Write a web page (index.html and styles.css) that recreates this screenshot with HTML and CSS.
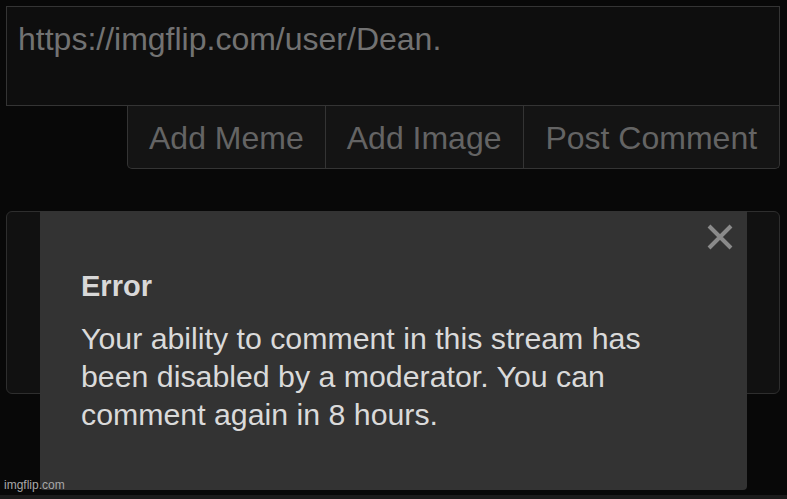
FILE: index.html
```html
<!DOCTYPE html>
<html lang="en">
<head>
<meta charset="utf-8">
<title>Comment</title>
<link rel="stylesheet" href="styles.css">
</head>
<body>
<div class="page">
  <div class="composer">
    <div class="input">https://imgflip.com/user/Dean.</div>
    <div class="actions">
      <div class="btn">Add Meme</div>
      <div class="btn">Add Image</div>
      <div class="btn">Post Comment</div>
    </div>
  </div>
  <div class="box"></div>
  <div class="modal">
    <svg class="close" width="26" height="26" viewBox="0 0 26 26" aria-hidden="true">
      <path d="M2 2 L24 24 M24 2 L2 24" stroke="#8a8a8a" stroke-width="4" stroke-linecap="butt"/>
    </svg>
    <div class="title">Error</div>
    <div class="message">Your ability to comment in this stream has<br>been disabled by a moderator. You can<br>comment again in 8 hours.</div>
  </div>
  <div class="watermark">imgflip.com</div>
</div>
<div class="strip"></div>
</body>
</html>
```

FILE: styles.css
```css
html, body {
  margin: 0;
  padding: 0;
  background: #080808;
  font-family: "Liberation Sans", Arial, sans-serif;
}
.page {
  position: relative;
  height: 495px;
  padding: 6px 7px 0 6px;
  box-sizing: border-box;
  overflow: hidden;
}
.composer {
  display: flex;
  flex-direction: column;
}
.input {
  height: 100px;
  box-sizing: border-box;
  border: 1px solid #343434;
  background: #0e0e0e;
  color: #727272;
  font-size: 32px;
  line-height: 38px;
  padding: 13px 11px 0 11px;
}
.actions {
  display: flex;
  margin-left: 121px;
  border: 1px solid #343434;
  border-top: none;
  border-radius: 0 0 5px 5px;
  background: #141414;
  overflow: hidden;
}
.btn {
  padding: 13px 21px 11px;
  font-size: 32px;
  line-height: 38px;
  color: #646464;
  white-space: nowrap;
}
.btn + .btn {
  border-left: 1px solid #343434;
}
.btn:last-child {
  flex: 1;
  text-align: center;
  padding: 13px 0 11px;
}
.box {
  margin-top: 42px;
  height: 183px;
  box-sizing: border-box;
  border: 1px solid #2e2e2e;
  border-radius: 6px;
  background: #111111;
}
.modal {
  position: absolute;
  left: 40px;
  top: 211px;
  width: 707px;
  height: 279px;
  box-sizing: border-box;
  background: #333333;
  border-radius: 0 0 4px 4px;
  padding: 59px 20px 0 41px;
  color: #dcdcdc;
}
.close {
  position: absolute;
  right: 14px;
  top: 13px;
}
.title {
  font-size: 29px;
  line-height: 32px;
  font-weight: bold;
  color: #d8d8d8;
}
.message {
  margin-top: 18px;
  font-size: 30.3px;
  line-height: 38px;
  color: #dadada;
}
.watermark {
  position: absolute;
  left: 4px;
  bottom: 3px;
  font-size: 12px;
  line-height: 14px;
  color: #a8a8a8;
}
.strip {
  height: 4px;
  background: #1b1b1b;
}
```
